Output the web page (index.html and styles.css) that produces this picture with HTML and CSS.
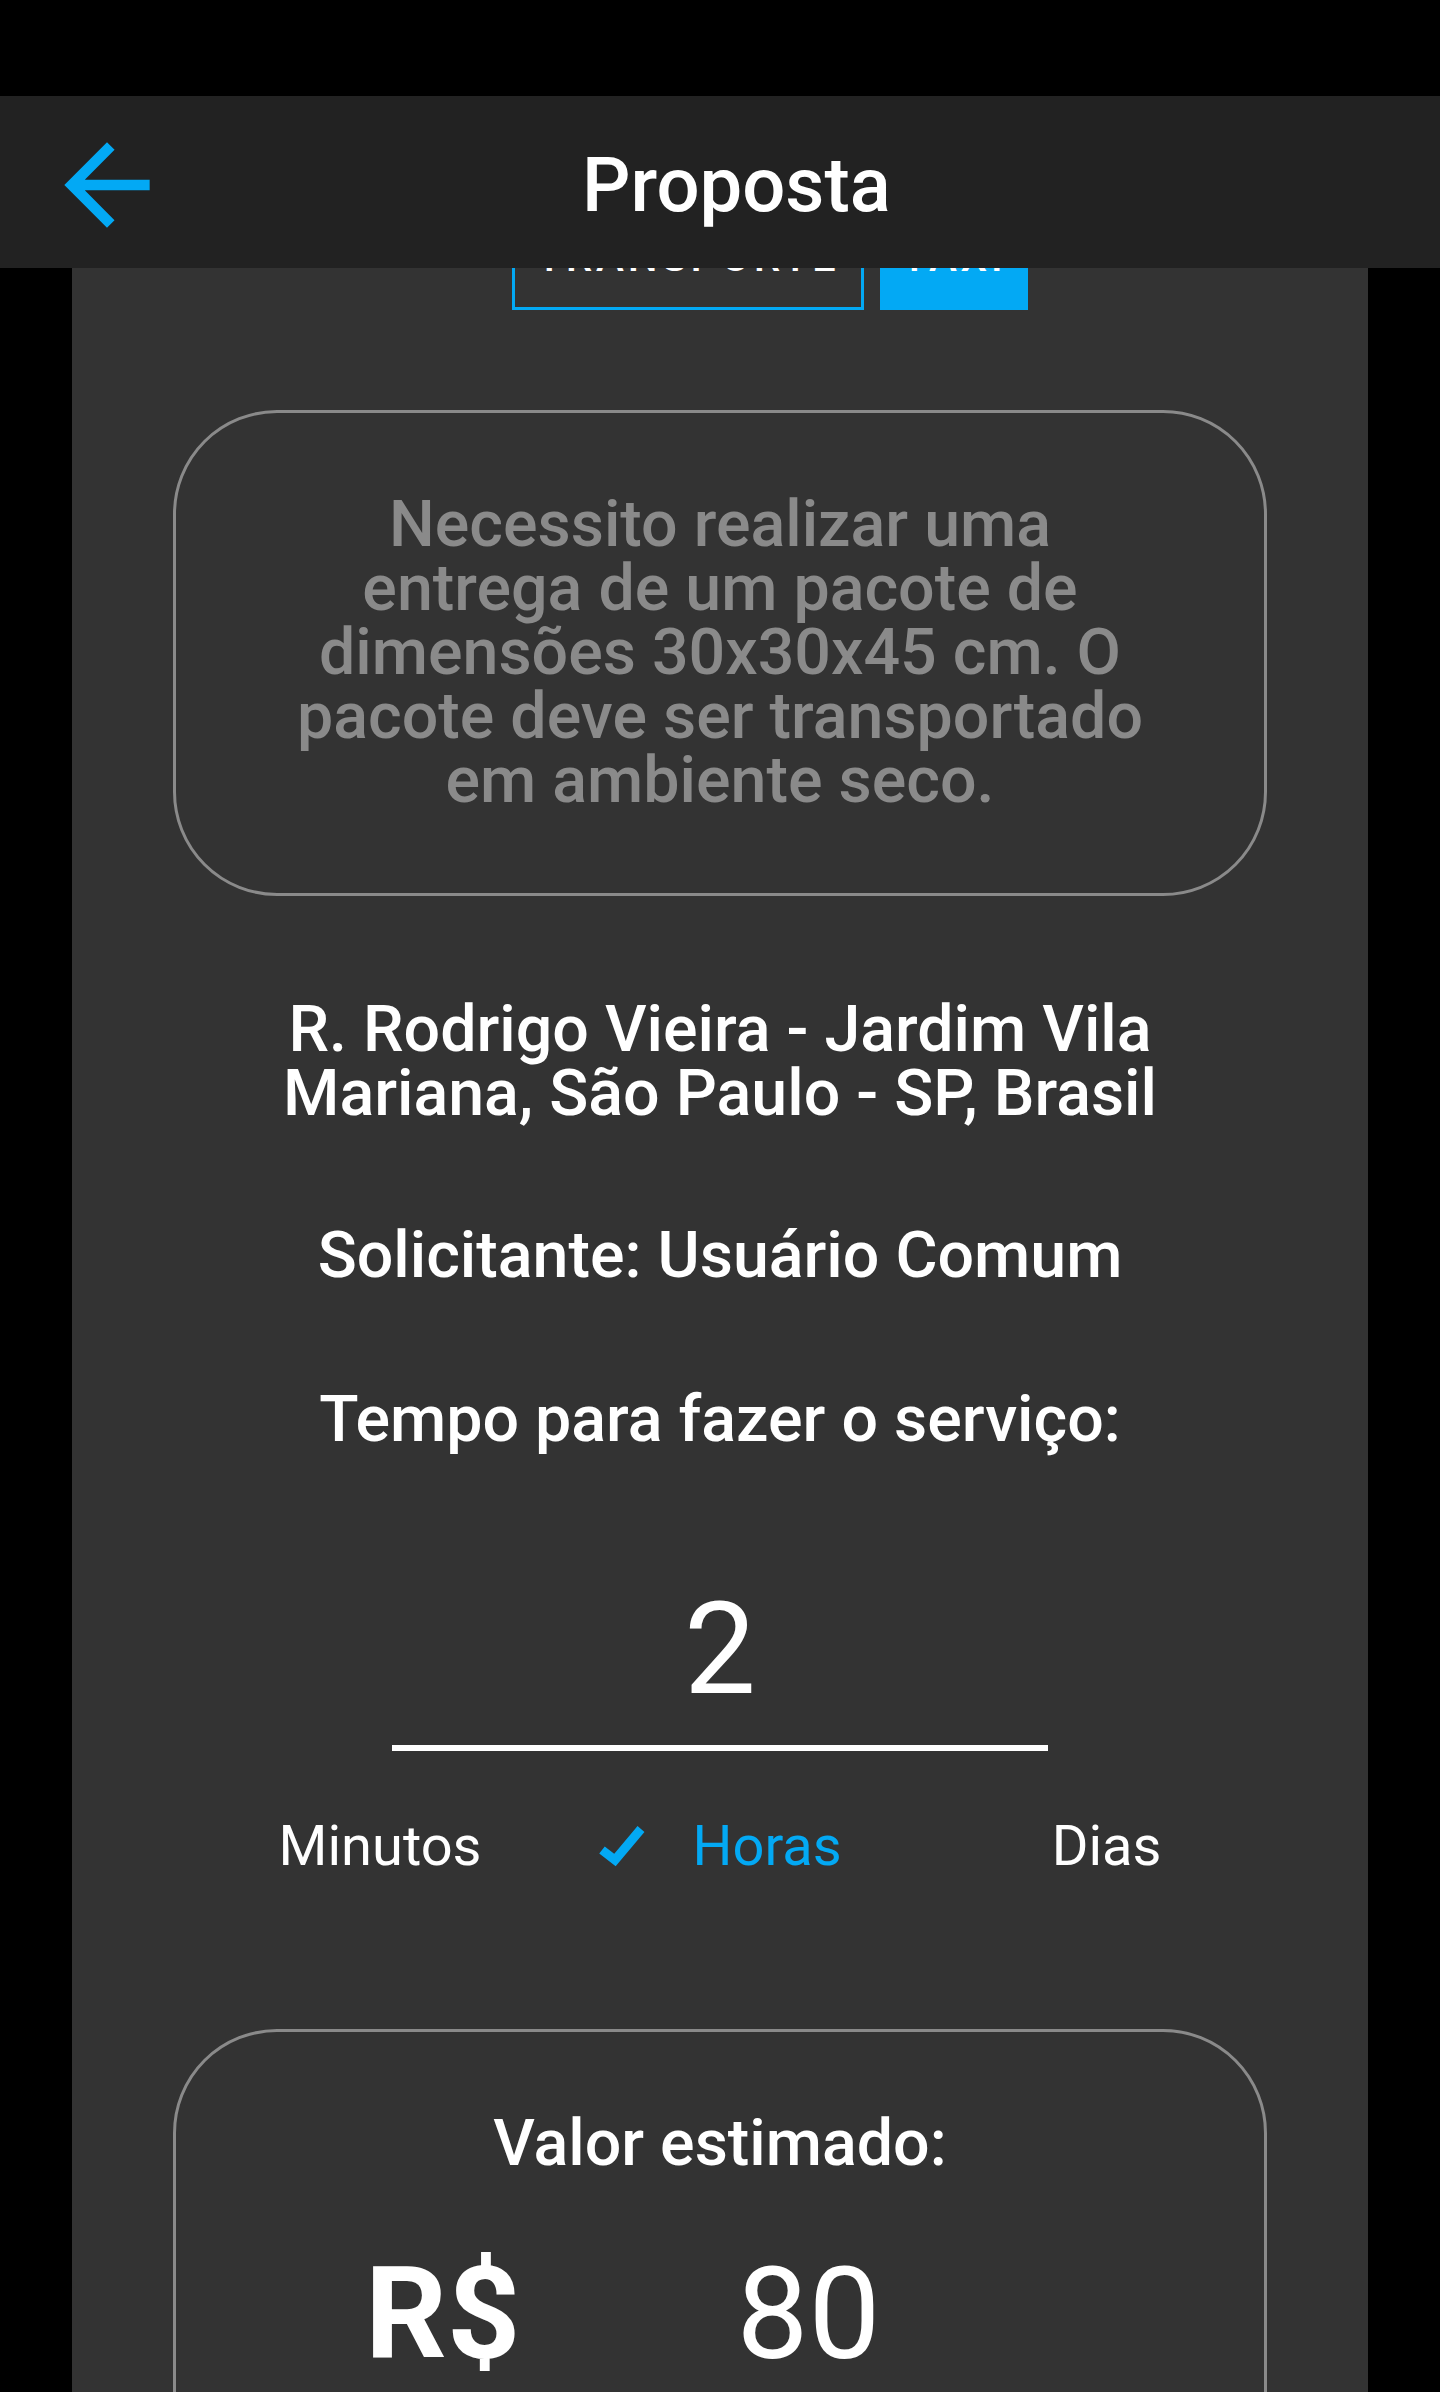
FILE: index.html
```html
<!DOCTYPE html>
<html lang="pt-BR">

<head>
    <meta charset="UTF-8">
    <meta name="viewport" content="width=device-width, initial-scale=1.0">
    <title>Proposta</title>
    <link rel="stylesheet" href="styles.css">
</head>

<body>
    <div class="app">
        <div class="status"></div>
        <header class="toolbar">
            <svg class="back" viewBox="0 0 24 24">
                <path d="M20 11H7.83l5.59-5.59L12 4l-8 8 8 8 1.41-1.41L7.83 13H20v-2z" />
            </svg>
            <h1 class="title">Proposta</h1>
        </header>

        <main class="panel">
            <div class="types">
                <button class="type type-outline">Transporte</button>
                <button class="type type-filled">Taxi</button>
            </div>

            <div class="box desc">
                Necessito realizar uma entrega de um pacote de dimensões 30x30x45 cm. O pacote deve ser transportado em ambiente seco.
            </div>

            <p class="info address">R. Rodrigo Vieira - Jardim Vila Mariana, São Paulo - SP, Brasil</p>
            <p class="info requester">Solicitante: Usuário Comum</p>
            <p class="info time-label">Tempo para fazer o serviço:</p>

            <div class="time-value">2</div>
            <div class="underline"></div>

            <ul class="units">
                <li class="unit">Minutos</li>
                <li class="unit unit-active">
                    <svg class="check" viewBox="0 0 47 46">
                        <polyline points="4,27 17,37 43,6" />
                    </svg>
                    Horas
                </li>
                <li class="unit">Dias</li>
            </ul>

            <div class="box price">
                <p class="price-label">Valor estimado:</p>
                <div class="price-row">
                    <span class="currency">R$</span>
                    <span class="amount">80</span>
                </div>
            </div>
        </main>
    </div>
</body>

</html>
```

FILE: styles.css
```css
* {
    margin: 0;
    padding: 0;
    box-sizing: border-box;
}

ul {
    list-style: none;
}

body {
    background: #000;
    font-family: Roboto, "Noto Sans", sans-serif;
    color: #fff;
}

.app {
    height: 2392px;
    overflow: hidden;
}

.status {
    height: 96px;
    background: #000;
}

.toolbar {
    position: relative;
    z-index: 2;
    height: 172px;
    padding: 5px 0 0 43px;
    display: flex;
    align-items: center;
    background: #222;
}

.toolbar .back {
    width: 128px;
    height: 128px;
    fill: #03a9f4;
    flex-shrink: 0;
}

.toolbar .title {
    margin-left: 411px;
    font-size: 76px;
    line-height: 76px;
    font-weight: 500;
}

.panel {
    margin: -66px 72px 0;
    min-height: 2400px;
    background: #333;
}

.types {
    height: 108px;
    padding-left: 440px;
    display: flex;
    gap: 16px;
}

.type {
    height: 108px;
    font-family: inherit;
    font-size: 42px;
    font-weight: 500;
    letter-spacing: 0.09em;
    text-transform: uppercase;
    color: #fff;
    border: 3px solid #03a9f4;
}

.type-outline {
    width: 352px;
    background: transparent;
}

.type-filled {
    width: 148px;
    background: #03a9f4;
}

.box {
    width: 1094px;
    margin: 0 auto;
    border: 3px solid #8a8a8a;
    border-radius: 104px;
}

.desc {
    margin-top: 100px;
    padding: 79px 110px 81px;
    font-size: 64.5px;
    line-height: 64px;
    font-weight: 500;
    color: #8a8a8a;
    text-align: center;
}

.info {
    font-size: 64.5px;
    line-height: 64px;
    font-weight: 500;
    text-align: center;
}

.address {
    margin-top: 101px;
    padding: 0 150px;
}

.requester {
    margin-top: 98px;
}

.time-label {
    margin-top: 100px;
}

.time-value {
    margin-top: 134px;
    font-size: 128px;
    line-height: 128px;
    text-align: center;
}

.underline {
    width: 656px;
    height: 6px;
    margin: 32px auto 0;
    background: #fff;
}

.units {
    margin-top: 67px;
    display: flex;
    justify-content: center;
    font-size: 56px;
    line-height: 56px;
}

.unit {
    display: flex;
    align-items: center;
}

.unit-active {
    margin: 0 210px 0 116px;
    color: #03a9f4;
}

.check {
    width: 47px;
    height: 46px;
    margin-right: 48px;
}

.check polyline {
    fill: none;
    stroke: #03a9f4;
    stroke-width: 9;
}

.price {
    margin-top: 155px;
    padding: 79px 0 120px;
}

.price-label {
    font-size: 64.5px;
    line-height: 64px;
    font-weight: 500;
    text-align: center;
}

.price-row {
    margin-top: 75px;
    padding-left: 189px;
    display: flex;
    font-size: 128px;
    line-height: 128px;
}

.currency {
    font-weight: 700;
}

.amount {
    margin-left: 216px;
}
```
